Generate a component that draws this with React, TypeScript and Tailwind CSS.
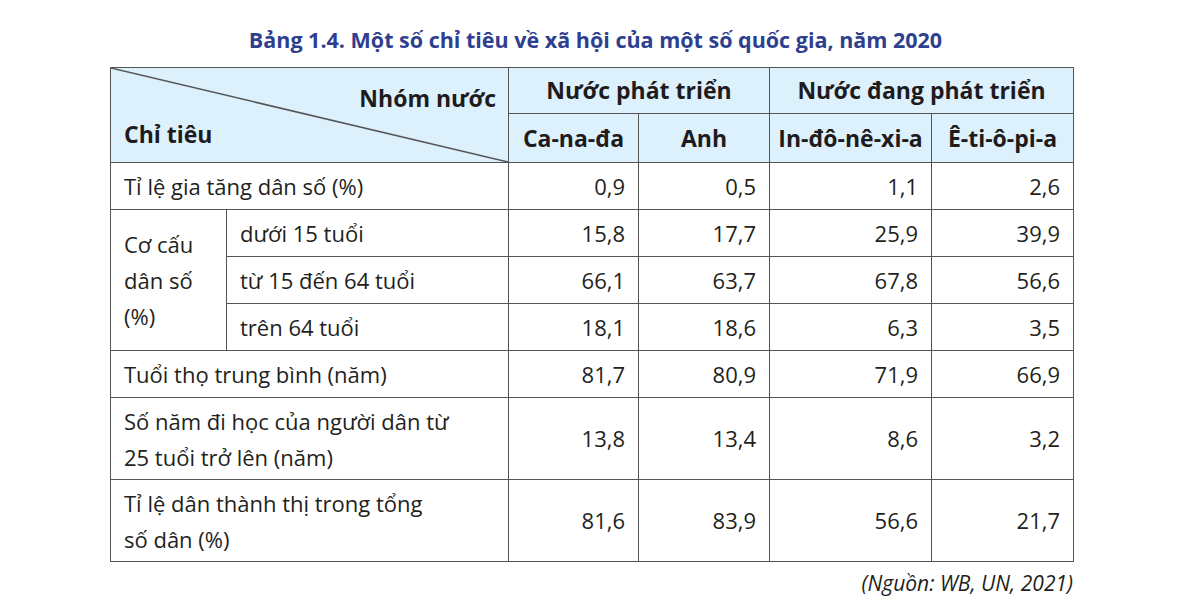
import React from 'react';

const font = { fontFamily: '"Open Sans", "Noto Sans", sans-serif' };

const rows = [
  { label: 'Tỉ lệ gia tăng dân số (%)', values: ['0,9', '0,5', '1,1', '2,6'] },
];

const structure = [
  { label: 'dưới 15 tuổi', values: ['15,8', '17,7', '25,9', '39,9'] },
  { label: 'từ 15 đến 64 tuổi', values: ['66,1', '63,7', '67,8', '56,6'] },
  { label: 'trên 64 tuổi', values: ['18,1', '18,6', '6,3', '3,5'] },
];

const tail = [
  { lines: ['Tuổi thọ trung bình (năm)'], values: ['81,7', '80,9', '71,9', '66,9'] },
  { lines: ['Số năm đi học của người dân từ', '25 tuổi trở lên (năm)'], values: ['13,8', '13,4', '8,6', '3,2'] },
  { lines: ['Tỉ lệ dân thành thị trong tổng', 'số dân (%)'], values: ['81,6', '83,9', '56,6', '21,7'] },
];

const cell = 'border-[1.5px] border-[#555555] px-[13px] align-middle';
const num = 'border-[1.5px] border-[#555555] pr-[13px] text-right align-middle';
const head = 'border-[1.5px] border-[#555555] font-bold';

export default function App() {
  return (
    <div className="w-[1191px] h-[596px] bg-white text-[#231f20] text-[22px]" style={font}>
      <h1 className="pt-[25px] text-center text-[#2e3f8f] font-bold text-[21.5px] leading-[30px]">
        Bảng 1.4. Một số chỉ tiêu về xã hội của một số quốc gia, năm 2020
      </h1>
      <table className="ml-[110px] mt-[12px] w-[963px] border-collapse table-fixed">
        <colgroup>
          <col className="w-[116px]" />
          <col className="w-[282px]" />
          <col className="w-[130px]" />
          <col className="w-[131px]" />
          <col className="w-[162px]" />
          <col className="w-[142px]" />
        </colgroup>
        <thead className="bg-[#dcf1fc] text-[23px] text-[#1f1b1c]">
          <tr className="h-[46px]">
            <th colSpan={2} rowSpan={2} className="relative border-[1.5px] border-[#555555] p-0 font-bold">
              <svg className="absolute inset-0 w-full h-full" preserveAspectRatio="none" viewBox="0 0 100 100">
                <line x1="0" y1="0" x2="100" y2="100" stroke="#555555" strokeWidth="1.5" vectorEffect="non-scaling-stroke" />
              </svg>
              <div className="flex flex-col h-[94px] pl-[13px] pr-[12px]">
                <span className="text-right pt-[15px] leading-[30px]">Nhóm nước</span>
                <span className="text-left pt-[6px] leading-[30px]">Chỉ tiêu</span>
              </div>
            </th>
            <th colSpan={2} className={head}>Nước phát triển</th>
            <th colSpan={2} className={head}>Nước đang phát triển</th>
          </tr>
          <tr className="h-[48px]">
            <th className={head}>Ca-na-đa</th>
            <th className={head}>Anh</th>
            <th className={head}>In-đô-nê-xi-a</th>
            <th className={head}>Ê-ti-ô-pi-a</th>
          </tr>
        </thead>
        <tbody>
          {rows.map((r) => (
            <tr key={r.label} className="h-[47px]">
              <td colSpan={2} className={cell}>{r.label}</td>
              {r.values.map((v, i) => (
                <td key={i} className={num}>{v}</td>
              ))}
            </tr>
          ))}
          {structure.map((r, idx) => (
            <tr key={r.label} className="h-[47px]">
              {idx === 0 && (
                <td rowSpan={3} className={`${cell} leading-[36px]`}>
                  Cơ cấu
                  <br />
                  dân số
                  <br />
                  (%)
                </td>
              )}
              <td className={cell}>{r.label}</td>
              {r.values.map((v, i) => (
                <td key={i} className={num}>{v}</td>
              ))}
            </tr>
          ))}
          {tail.map((r) => (
            <tr key={r.lines[0]} className={r.lines.length > 1 ? 'h-[82px]' : 'h-[47px]'}>
              <td colSpan={2} className={`${cell} leading-[36px]`}>
                {r.lines.map((l) => (
                  <div key={l}>{l}</div>
                ))}
              </td>
              {r.values.map((v, i) => (
                <td key={i} className={num}>{v}</td>
              ))}
            </tr>
          ))}
        </tbody>
      </table>
      <p className="w-[1073px] text-right italic text-[21px] mt-[7px] leading-[28px]">(Nguồn: WB, UN, 2021)</p>
    </div>
  );
}
